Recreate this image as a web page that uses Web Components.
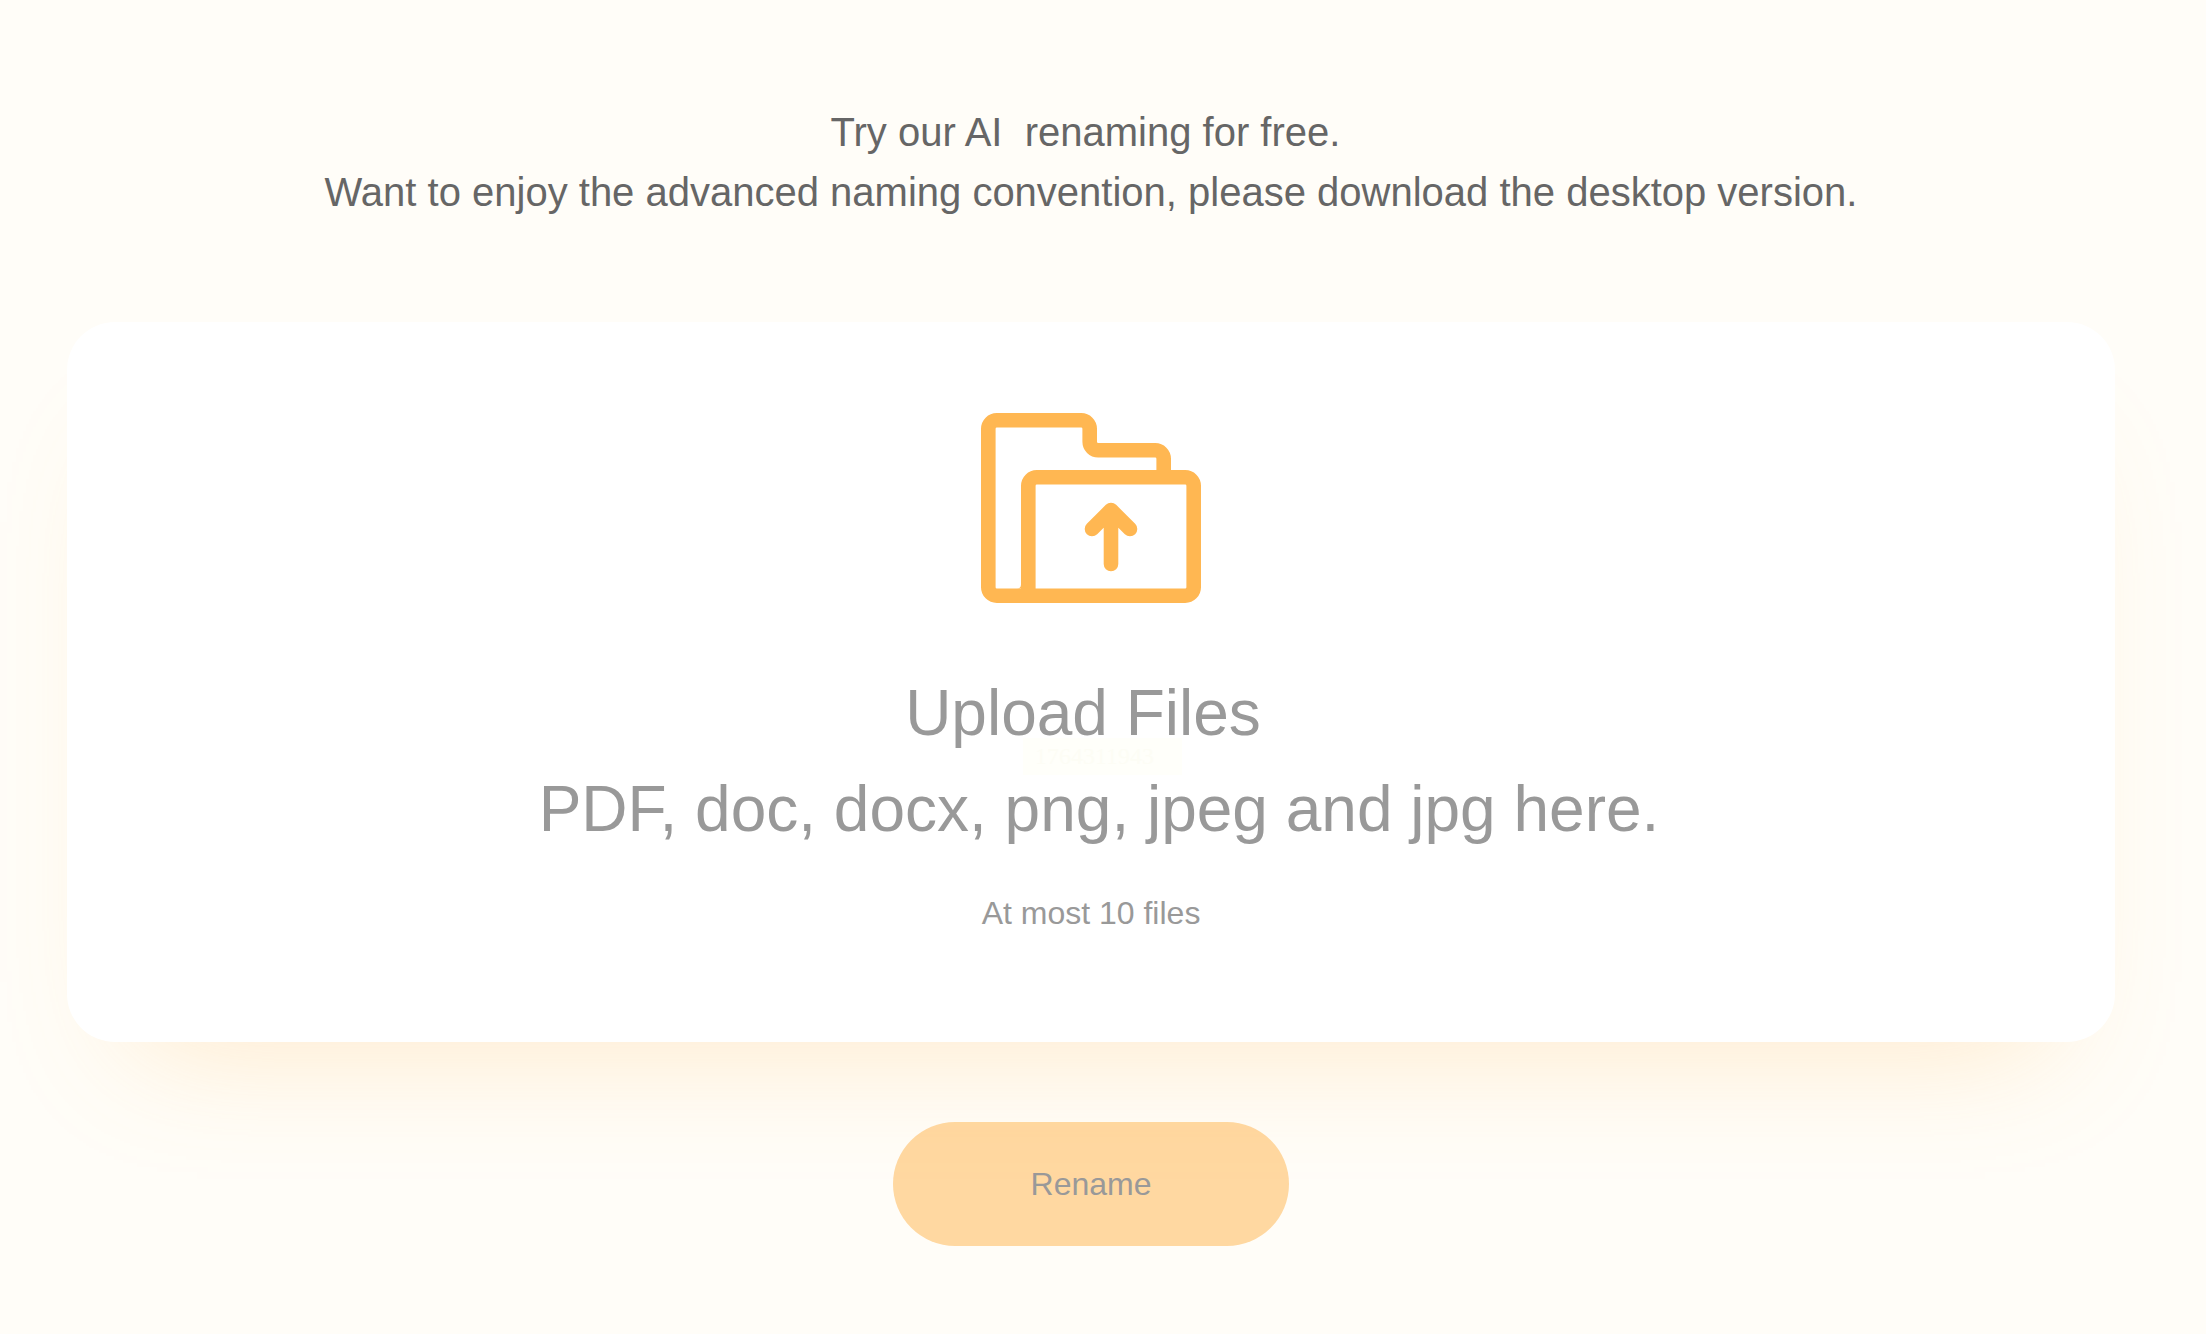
<!DOCTYPE html>
<html>
<head>
<meta charset="utf-8">
<style>
html, body { margin: 0; height: 100%; }
body { background: #fffdf8; font-family: "Liberation Sans", Arial, sans-serif; }
</style>
</head>
<body>
<rename-page>
  <intro-text>
    <div>Try our AI&nbsp; renaming for free.&nbsp;</div>
    <div>Want to enjoy the advanced naming convention, please download the desktop version.</div>
  </intro-text>
  <upload-card>
    <upload-icon></upload-icon>
    <span slot="title">Upload Files</span>
    <span slot="types">PDF, doc, docx, png, jpeg and jpg here.</span>
    <span slot="mark">1764311943</span>
    <span slot="limit">At most 10 files</span>
  </upload-card>
  <rename-button>Rename</rename-button>
</rename-page>

<script>
// page column
class RenamePage extends HTMLElement {
  constructor(){
    super();
    this.attachShadow({mode:"open"}).innerHTML = `
<style>
:host{
  display: flex;
  flex-direction: column;
  align-items: stretch;
  height: 1334px;
  padding: 102px 91px 0 67px;
  box-sizing: border-box;
  overflow: hidden;
}
</style>
<slot></slot>`;
  }
}

class IntroText extends HTMLElement {
  constructor(){
    super();
    this.attachShadow({mode:"open"}).innerHTML = `
<style>
:host{
  display: block;
  height: 120px;
  margin-bottom: 100px;
  text-align: center;
  font-size: 40px;
  line-height: 60px;
  color: #666666;
}
</style>
<slot></slot>`;
  }
}

class UploadCard extends HTMLElement {
  constructor(){
    super();
    this.attachShadow({mode:"open"}).innerHTML = `
<style>
:host{
  display: flex;
  flex-direction: column;
  align-items: center;
  height: 720px;
  box-sizing: border-box;
  padding-top: 91px;
  background: #fff;
  border-radius: 48px;
  box-shadow: 0 70px 120px -70px rgba(255, 183, 82, 0.3);
  color: #999999;
  position: relative;
}
.big{
  position: relative;
  z-index: 1;
  font-size: 64px;
  line-height: 96px;
  text-align: center;
  white-space: nowrap;
}
.title{ margin-top: 62px; margin-left: -16px; }
.types{ margin-left: 16px; }
.limit{ margin-top: 36px; font-size: 32px; line-height: 40px; }
/* faint stamp behind the headline */
.mark{
  position: absolute;
  left: 956px; top: 416px;
  width: 159px; height: 37px;
  box-sizing: border-box;
  padding-left: 12px;
  background: #fffffa;
  color: #fdfdf5;
  font-family: "Liberation Serif", serif;
  font-size: 24px;
  line-height: 37px;
}
</style>
<slot></slot>
<div class="big title"><slot name="title"></slot></div>
<div class="big types"><slot name="types"></slot></div>
<div class="limit"><slot name="limit"></slot></div>
<div class="mark"><slot name="mark"></slot></div>`;
  }
}

class UploadIcon extends HTMLElement {
  constructor(){
    super();
    this.attachShadow({mode:"open"}).innerHTML = `
<style>
:host{ display: block; width: 220px; height: 190px; }
svg{ display: block; }
</style>
<svg width="220" height="190" viewBox="0 0 220 190" fill="none" stroke="#ffb752" stroke-width="14.6" stroke-linecap="butt" stroke-linejoin="miter">
  <path d="M47.300 182.700H15.800A8.500 8.500 0 0 1 7.300 174.200V15.800A8.500 8.500 0 0 1 15.800 7.300H100.200A8.500 8.500 0 0 1 108.700 15.800V28.800A8.500 8.500 0 0 0 117.200 37.300H174.200A8.500 8.500 0 0 1 182.700 45.800V64.300"/>
  <path d="M47.300 182.700V72.800A8.500 8.500 0 0 1 55.800 64.300H204.200A8.500 8.500 0 0 1 212.700 72.800V174.200A8.500 8.500 0 0 1 204.200 182.700H47.300Z"/>
  <path d="M130 151V97M111 116L130 97L149 116" stroke-linecap="round" stroke-linejoin="round"/>
  <path d="M40 171.400Q40 175.400 36 175.400H40Z" fill="#ffb752" stroke="none"/>
</svg>`;
  }
}

class RenameButton extends HTMLElement {
  constructor(){
    super();
    this.attachShadow({mode:"open"}).innerHTML = `
<style>
:host{
  display: flex;
  align-items: center;
  justify-content: center;
  align-self: center;
  width: 396px;
  height: 124px;
  margin-top: 80px;
  border-radius: 62px;
  background: #ffd8a1;
  color: #999999;
  font-size: 32px;
}
</style>
<slot></slot>`;
  }
}

customElements.define("rename-page", RenamePage);
customElements.define("intro-text", IntroText);
customElements.define("upload-card", UploadCard);
customElements.define("upload-icon", UploadIcon);
customElements.define("rename-button", RenameButton);
</script>
</body>
</html>
